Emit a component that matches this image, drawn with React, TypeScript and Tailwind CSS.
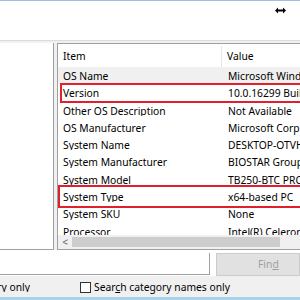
import React from 'react';

const rows: [string, string][] = [
  ['OS Name', 'Microsoft Windows 10 Pro'],
  ['Version', '10.0.16299 Build 16299'],
  ['Other OS Description', 'Not Available'],
  ['OS Manufacturer', 'Microsoft Corporation'],
  ['System Name', 'DESKTOP-OTVHKQ2'],
  ['System Manufacturer', 'BIOSTAR Group'],
  ['System Model', 'TB250-BTC PRO'],
  ['System Type', 'x64-based PC'],
  ['System SKU', 'None'],
  ['Processor', 'Intel(R) Celeron(R) CPU G3930'],
];

const marked: Record<string, string> = {
  Version: 'left-[2px] -top-[1px] -bottom-[1px]',
  'System Type': 'left-0 -top-[3px] -bottom-[3px]',
};

const App: React.FC = () => {
  return (
    <div className="w-[300px] h-[300px] overflow-hidden flex flex-col bg-white text-[10.3px] text-black font-['Noto_Sans',sans-serif] leading-none">
      <div className="h-[1px] bg-[#9fbfdc]" />
      <div className="h-[39px] flex justify-end items-start pt-[6px] pr-[14px]">
        <svg width="11" height="7" viewBox="0 0 11 7">
          <path d="M0 3.5 L3 0.5 V2.5 H8 V0.5 L11 3.5 L8 6.5 V4.5 H3 V6.5 Z" fill="#000" />
        </svg>
      </div>
      <div className="h-[3px] bg-[#f0f0f0] border-t border-[#dcdcdc]" />

      <div className="h-[207px] flex bg-[#f0f0f0]">
        <div className="w-[54px] bg-white border-r border-b border-[#a0a0a0]" />
        <div className="w-[3px]" />
        <div className="flex-1 flex flex-col bg-white border-l border-t border-b border-[#a0a0a0] overflow-hidden">
          <div className="h-[23px] flex items-center shrink-0 pt-[2px]">
            <div className="w-[164px] h-full pl-[5px] flex items-center border-r border-[#e5e5e5]">Item</div>
            <div className="pl-[5px]">Value</div>
          </div>
          <div className="flex-1 overflow-hidden">
            {rows.map(([item, value], i) => (
              <div
                key={item}
                className={
                  'relative h-[17.3px] flex items-center whitespace-nowrap pt-[1px] ' +
                  (i === 0 ? 'bg-[#f0f0f0]' : '')
                }
              >
                <div className="w-[165px] pl-[5px] shrink-0 overflow-hidden">{item}</div>
                <div className="pl-[5px]">{value}</div>
                {marked[item] && (
                  <div className={'absolute -right-[4px] border-2 border-[#e0202c] ' + marked[item]} />
                )}
              </div>
            ))}
          </div>
          <div className="h-[14px] shrink-0 flex items-center bg-[#f0f0f0]">
            <div className="w-[14px] flex justify-center text-[10px] text-[#606060]">&lt;</div>
            <div className="w-[208px] h-[10px] bg-[#cdcdcd]" />
          </div>
        </div>
      </div>

      <div className="h-[26px] flex items-center gap-[6px] pt-[2px]">
        <div className="w-[210px] h-[22px] bg-white border-r border-b border-[#a0a0a0]" />
        <div className="flex-1 h-[23px] flex items-center pl-[41px] bg-[#e1e1e1] border border-[#cccccc] text-[#a0a0a0]">
          Fin<span className="underline">d</span>
        </div>
      </div>

      <div className="flex-1 bg-[#f0f0f0] flex items-center whitespace-nowrap pt-[1px]">
        <div className="w-[30px] flex justify-end overflow-hidden">
          <span>Search selected category only</span>
        </div>
        <div className="w-[50px]" />
        <div className="w-[11px] h-[11px] border border-[#333333] bg-white" />
        <span className="ml-[3px]">
          Sear<span className="underline">c</span>h category names only
        </span>
      </div>
      <div className="h-[3px] bg-[#a9d3e8]" />
    </div>
  );
};

export default App;
